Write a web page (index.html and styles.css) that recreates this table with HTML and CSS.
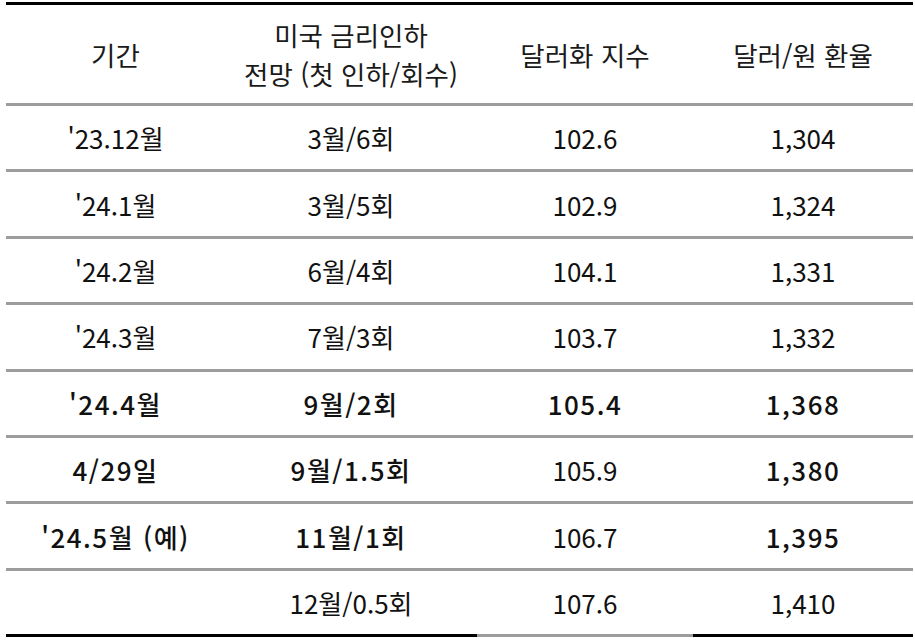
FILE: index.html
```html
<!DOCTYPE html>
<html lang="ko">
<head>
<meta charset="utf-8">
<link rel="stylesheet" href="styles.css">
</head>
<body>
<div class="table">
  <div class="row head">
    <div class="cell">기간</div>
    <div class="cell two">미국 금리인하<br>전망 (첫 인하/회수)</div>
    <div class="cell">달러화 지수</div>
    <div class="cell">달러/원 환율</div>
  </div>
  <div class="row">
    <div class="cell">'23.12월</div>
    <div class="cell">3월/6회</div>
    <div class="cell">102.6</div>
    <div class="cell">1,304</div>
  </div>
  <div class="row">
    <div class="cell">'24.1월</div>
    <div class="cell">3월/5회</div>
    <div class="cell">102.9</div>
    <div class="cell">1,324</div>
  </div>
  <div class="row">
    <div class="cell">'24.2월</div>
    <div class="cell">6월/4회</div>
    <div class="cell">104.1</div>
    <div class="cell">1,331</div>
  </div>
  <div class="row">
    <div class="cell">'24.3월</div>
    <div class="cell">7월/3회</div>
    <div class="cell">103.7</div>
    <div class="cell">1,332</div>
  </div>
  <div class="row">
    <div class="cell b">'24.4월</div>
    <div class="cell b">9월/2회</div>
    <div class="cell b">105.4</div>
    <div class="cell b">1,368</div>
  </div>
  <div class="row">
    <div class="cell b">4/29일</div>
    <div class="cell b">9월/1.5회</div>
    <div class="cell">105.9</div>
    <div class="cell b">1,380</div>
  </div>
  <div class="row">
    <div class="cell b">'24.5월 (예)</div>
    <div class="cell b">11월/1회</div>
    <div class="cell">106.7</div>
    <div class="cell b">1,395</div>
  </div>
  <div class="row last">
    <div class="cell"></div>
    <div class="cell">12월/0.5회</div>
    <div class="cell">107.6</div>
    <div class="cell">1,410</div>
  </div>
</div>
</body>
</html>
```
FILE: styles.css
```css
html, body {
  margin: 0;
  padding: 0;
  background: #fff;
}
body {
  font-family: "Noto Sans CJK KR", "Noto Sans", sans-serif;
  color: #111;
}
.table {
  margin: 2px 0 0 6px;
  width: 907px;
  border-top: 3.5px solid #000;
  display: flex;
  flex-direction: column;
}
.row {
  display: grid;
  grid-template-columns: 219px 252px 216px 220px;
  height: 66.4px;
  box-sizing: border-box;
}
.row.head {
  height: 101px;
}
.cell {
  display: flex;
  align-items: center;
  justify-content: center;
  text-align: center;
  font-size: 26px;
  line-height: 35px;
  border-bottom: 3px solid #9c9c9c;
  white-space: nowrap;
}
.head .cell {
  color: #1a1a1a;
  font-size: 26.5px;
  line-height: 39px;
}
.cell.b {
  font-weight: 500;
  letter-spacing: 1.5px;
}
.last .cell {
  border-bottom-color: #000;
}
.last .cell:nth-child(3) {
  border-bottom-color: #9c9c9c;
}
```
